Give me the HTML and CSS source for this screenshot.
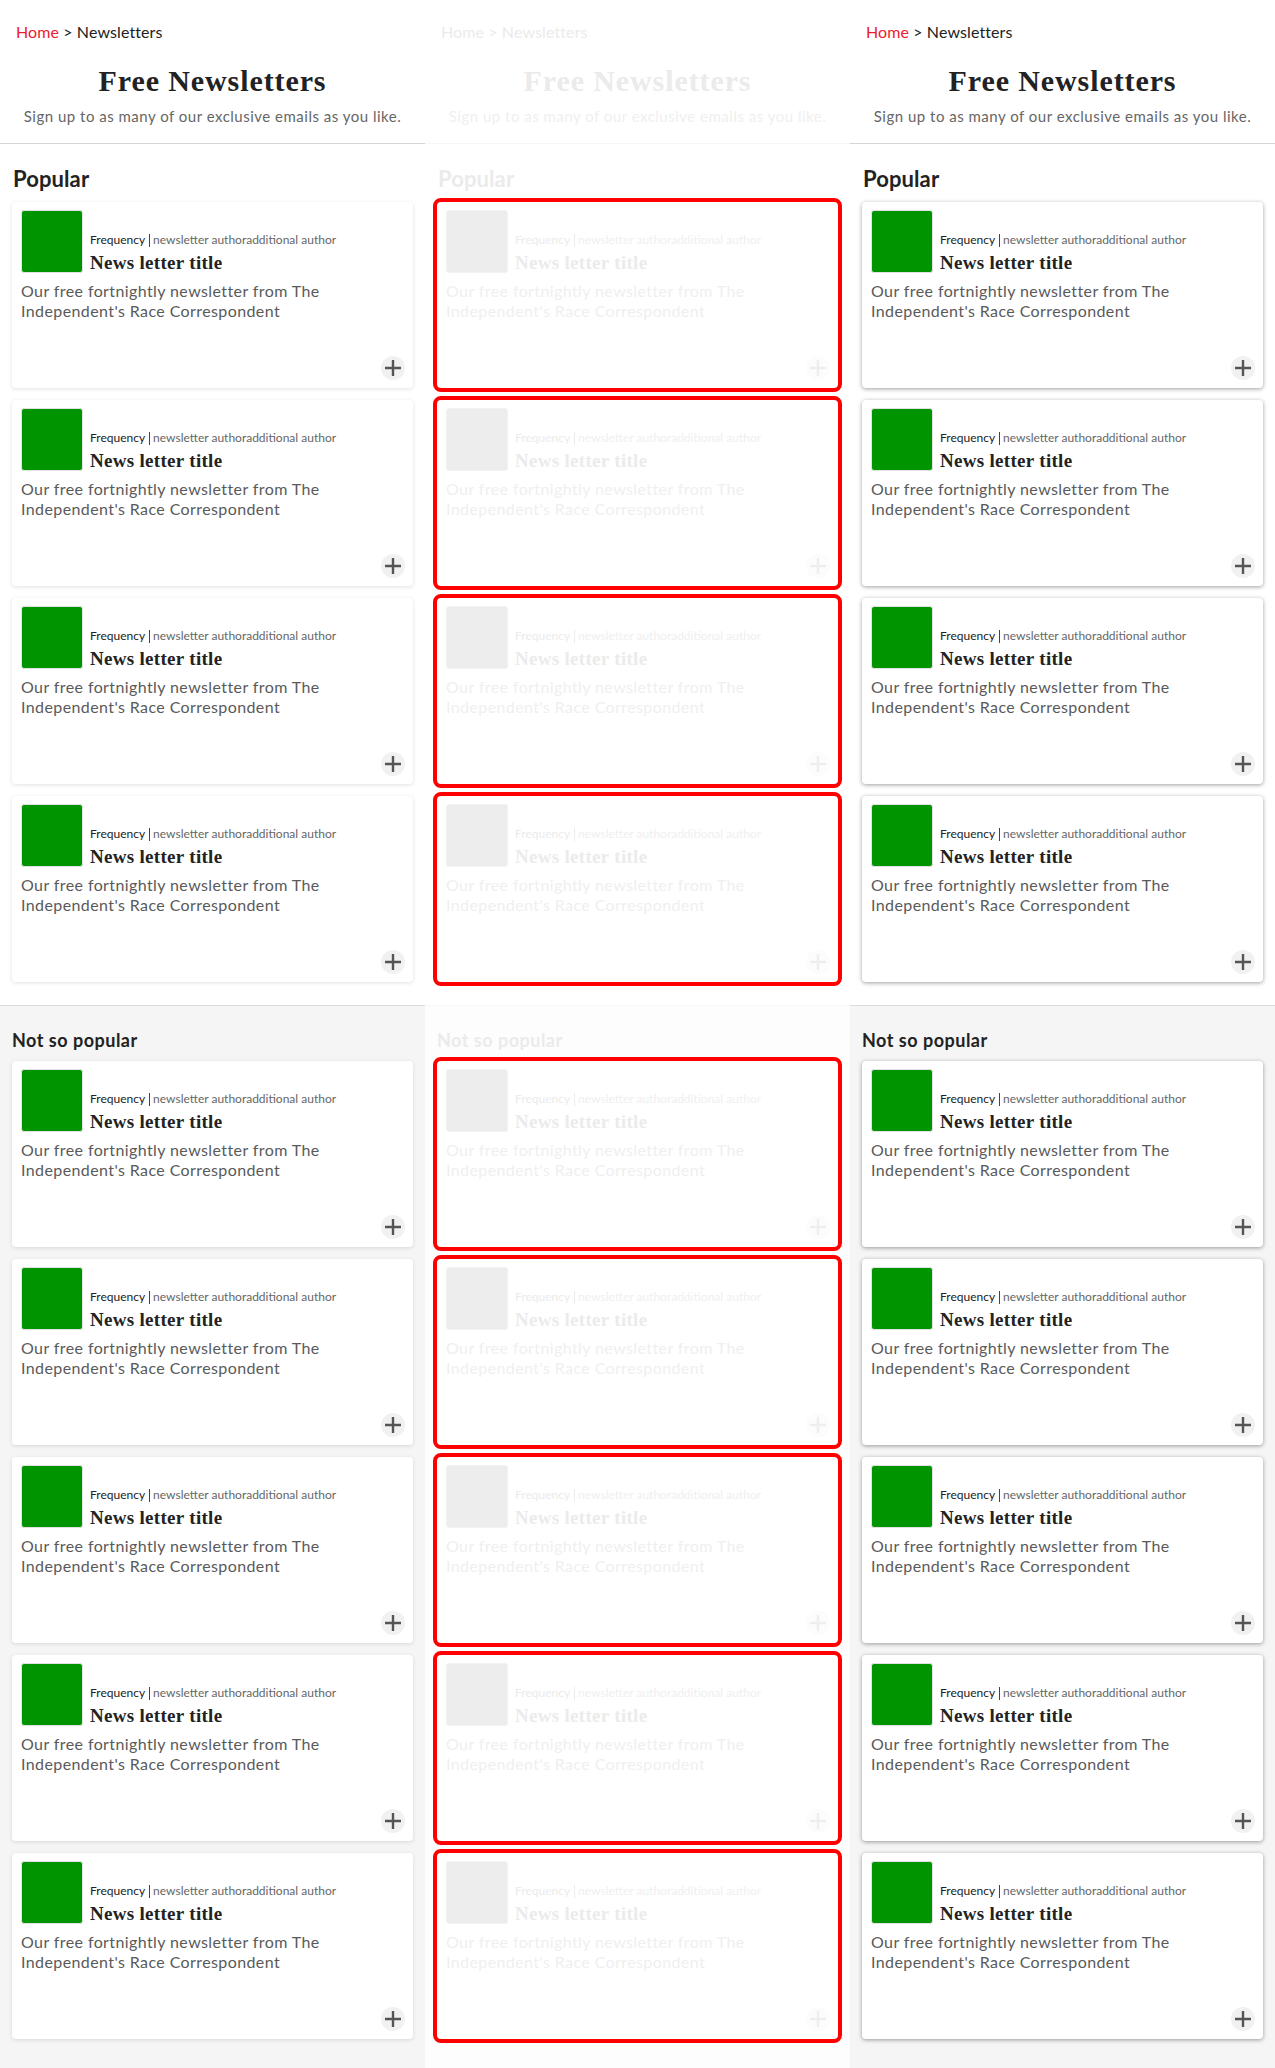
FILE: index.html
```html
<!DOCTYPE html>
<html lang="en">
<head>
<meta charset="utf-8">
<title>Free Newsletters</title>
<link rel="stylesheet" href="styles.css">
</head>
<body>
<div class="panels">

  <div class="panel">
    <header class="page-head">
      <nav class="crumbs"><a class="crumb-home" href="#">Home</a> &gt; <span>Newsletters</span></nav>
      <h1 class="page-title">Free Newsletters</h1>
      <p class="page-sub">Sign up to as many of our exclusive emails as you like.</p>
    </header>
    <section class="group">
      <h2 class="group-title">Popular</h2>
      <div class="cards">
        <article class="card"><div class="card-top"><div class="thumb"></div><div class="card-info"><p class="meta"><span class="freq">Frequency</span><span class="sep"></span><span class="authors">newsletter authoradditional author</span></p><h3 class="card-title">News letter title</h3></div></div><p class="desc">Our free fortnightly newsletter from The Independent's Race Correspondent</p><button class="add" type="button"><svg viewBox="0 0 16 16" width="16" height="16"><path d="M8 0v16M0 8h16"/></svg></button></article>
        <article class="card"><div class="card-top"><div class="thumb"></div><div class="card-info"><p class="meta"><span class="freq">Frequency</span><span class="sep"></span><span class="authors">newsletter authoradditional author</span></p><h3 class="card-title">News letter title</h3></div></div><p class="desc">Our free fortnightly newsletter from The Independent's Race Correspondent</p><button class="add" type="button"><svg viewBox="0 0 16 16" width="16" height="16"><path d="M8 0v16M0 8h16"/></svg></button></article>
        <article class="card"><div class="card-top"><div class="thumb"></div><div class="card-info"><p class="meta"><span class="freq">Frequency</span><span class="sep"></span><span class="authors">newsletter authoradditional author</span></p><h3 class="card-title">News letter title</h3></div></div><p class="desc">Our free fortnightly newsletter from The Independent's Race Correspondent</p><button class="add" type="button"><svg viewBox="0 0 16 16" width="16" height="16"><path d="M8 0v16M0 8h16"/></svg></button></article>
        <article class="card"><div class="card-top"><div class="thumb"></div><div class="card-info"><p class="meta"><span class="freq">Frequency</span><span class="sep"></span><span class="authors">newsletter authoradditional author</span></p><h3 class="card-title">News letter title</h3></div></div><p class="desc">Our free fortnightly newsletter from The Independent's Race Correspondent</p><button class="add" type="button"><svg viewBox="0 0 16 16" width="16" height="16"><path d="M8 0v16M0 8h16"/></svg></button></article>
      </div>
    </section>
    <section class="group group-alt">
      <h2 class="group-title group-title-sm">Not so popular</h2>
      <div class="cards">
        <article class="card"><div class="card-top"><div class="thumb"></div><div class="card-info"><p class="meta"><span class="freq">Frequency</span><span class="sep"></span><span class="authors">newsletter authoradditional author</span></p><h3 class="card-title">News letter title</h3></div></div><p class="desc">Our free fortnightly newsletter from The Independent's Race Correspondent</p><button class="add" type="button"><svg viewBox="0 0 16 16" width="16" height="16"><path d="M8 0v16M0 8h16"/></svg></button></article>
        <article class="card"><div class="card-top"><div class="thumb"></div><div class="card-info"><p class="meta"><span class="freq">Frequency</span><span class="sep"></span><span class="authors">newsletter authoradditional author</span></p><h3 class="card-title">News letter title</h3></div></div><p class="desc">Our free fortnightly newsletter from The Independent's Race Correspondent</p><button class="add" type="button"><svg viewBox="0 0 16 16" width="16" height="16"><path d="M8 0v16M0 8h16"/></svg></button></article>
        <article class="card"><div class="card-top"><div class="thumb"></div><div class="card-info"><p class="meta"><span class="freq">Frequency</span><span class="sep"></span><span class="authors">newsletter authoradditional author</span></p><h3 class="card-title">News letter title</h3></div></div><p class="desc">Our free fortnightly newsletter from The Independent's Race Correspondent</p><button class="add" type="button"><svg viewBox="0 0 16 16" width="16" height="16"><path d="M8 0v16M0 8h16"/></svg></button></article>
        <article class="card"><div class="card-top"><div class="thumb"></div><div class="card-info"><p class="meta"><span class="freq">Frequency</span><span class="sep"></span><span class="authors">newsletter authoradditional author</span></p><h3 class="card-title">News letter title</h3></div></div><p class="desc">Our free fortnightly newsletter from The Independent's Race Correspondent</p><button class="add" type="button"><svg viewBox="0 0 16 16" width="16" height="16"><path d="M8 0v16M0 8h16"/></svg></button></article>
        <article class="card"><div class="card-top"><div class="thumb"></div><div class="card-info"><p class="meta"><span class="freq">Frequency</span><span class="sep"></span><span class="authors">newsletter authoradditional author</span></p><h3 class="card-title">News letter title</h3></div></div><p class="desc">Our free fortnightly newsletter from The Independent's Race Correspondent</p><button class="add" type="button"><svg viewBox="0 0 16 16" width="16" height="16"><path d="M8 0v16M0 8h16"/></svg></button></article>
      </div>
    </section>
  </div>

  <div class="panel panel-ghost">
    <header class="page-head">
      <nav class="crumbs"><a class="crumb-home" href="#">Home</a> &gt; <span>Newsletters</span></nav>
      <h1 class="page-title">Free Newsletters</h1>
      <p class="page-sub">Sign up to as many of our exclusive emails as you like.</p>
    </header>
    <section class="group">
      <h2 class="group-title">Popular</h2>
      <div class="cards">
        <article class="card"><div class="card-top"><div class="thumb"></div><div class="card-info"><p class="meta"><span class="freq">Frequency</span><span class="sep"></span><span class="authors">newsletter authoradditional author</span></p><h3 class="card-title">News letter title</h3></div></div><p class="desc">Our free fortnightly newsletter from The Independent's Race Correspondent</p><button class="add" type="button"><svg viewBox="0 0 16 16" width="16" height="16"><path d="M8 0v16M0 8h16"/></svg></button></article>
        <article class="card"><div class="card-top"><div class="thumb"></div><div class="card-info"><p class="meta"><span class="freq">Frequency</span><span class="sep"></span><span class="authors">newsletter authoradditional author</span></p><h3 class="card-title">News letter title</h3></div></div><p class="desc">Our free fortnightly newsletter from The Independent's Race Correspondent</p><button class="add" type="button"><svg viewBox="0 0 16 16" width="16" height="16"><path d="M8 0v16M0 8h16"/></svg></button></article>
        <article class="card"><div class="card-top"><div class="thumb"></div><div class="card-info"><p class="meta"><span class="freq">Frequency</span><span class="sep"></span><span class="authors">newsletter authoradditional author</span></p><h3 class="card-title">News letter title</h3></div></div><p class="desc">Our free fortnightly newsletter from The Independent's Race Correspondent</p><button class="add" type="button"><svg viewBox="0 0 16 16" width="16" height="16"><path d="M8 0v16M0 8h16"/></svg></button></article>
        <article class="card"><div class="card-top"><div class="thumb"></div><div class="card-info"><p class="meta"><span class="freq">Frequency</span><span class="sep"></span><span class="authors">newsletter authoradditional author</span></p><h3 class="card-title">News letter title</h3></div></div><p class="desc">Our free fortnightly newsletter from The Independent's Race Correspondent</p><button class="add" type="button"><svg viewBox="0 0 16 16" width="16" height="16"><path d="M8 0v16M0 8h16"/></svg></button></article>
      </div>
    </section>
    <section class="group group-alt">
      <h2 class="group-title group-title-sm">Not so popular</h2>
      <div class="cards">
        <article class="card"><div class="card-top"><div class="thumb"></div><div class="card-info"><p class="meta"><span class="freq">Frequency</span><span class="sep"></span><span class="authors">newsletter authoradditional author</span></p><h3 class="card-title">News letter title</h3></div></div><p class="desc">Our free fortnightly newsletter from The Independent's Race Correspondent</p><button class="add" type="button"><svg viewBox="0 0 16 16" width="16" height="16"><path d="M8 0v16M0 8h16"/></svg></button></article>
        <article class="card"><div class="card-top"><div class="thumb"></div><div class="card-info"><p class="meta"><span class="freq">Frequency</span><span class="sep"></span><span class="authors">newsletter authoradditional author</span></p><h3 class="card-title">News letter title</h3></div></div><p class="desc">Our free fortnightly newsletter from The Independent's Race Correspondent</p><button class="add" type="button"><svg viewBox="0 0 16 16" width="16" height="16"><path d="M8 0v16M0 8h16"/></svg></button></article>
        <article class="card"><div class="card-top"><div class="thumb"></div><div class="card-info"><p class="meta"><span class="freq">Frequency</span><span class="sep"></span><span class="authors">newsletter authoradditional author</span></p><h3 class="card-title">News letter title</h3></div></div><p class="desc">Our free fortnightly newsletter from The Independent's Race Correspondent</p><button class="add" type="button"><svg viewBox="0 0 16 16" width="16" height="16"><path d="M8 0v16M0 8h16"/></svg></button></article>
        <article class="card"><div class="card-top"><div class="thumb"></div><div class="card-info"><p class="meta"><span class="freq">Frequency</span><span class="sep"></span><span class="authors">newsletter authoradditional author</span></p><h3 class="card-title">News letter title</h3></div></div><p class="desc">Our free fortnightly newsletter from The Independent's Race Correspondent</p><button class="add" type="button"><svg viewBox="0 0 16 16" width="16" height="16"><path d="M8 0v16M0 8h16"/></svg></button></article>
        <article class="card"><div class="card-top"><div class="thumb"></div><div class="card-info"><p class="meta"><span class="freq">Frequency</span><span class="sep"></span><span class="authors">newsletter authoradditional author</span></p><h3 class="card-title">News letter title</h3></div></div><p class="desc">Our free fortnightly newsletter from The Independent's Race Correspondent</p><button class="add" type="button"><svg viewBox="0 0 16 16" width="16" height="16"><path d="M8 0v16M0 8h16"/></svg></button></article>
      </div>
    </section>
  </div>

  <div class="panel panel-strong">
    <header class="page-head">
      <nav class="crumbs"><a class="crumb-home" href="#">Home</a> &gt; <span>Newsletters</span></nav>
      <h1 class="page-title">Free Newsletters</h1>
      <p class="page-sub">Sign up to as many of our exclusive emails as you like.</p>
    </header>
    <section class="group">
      <h2 class="group-title">Popular</h2>
      <div class="cards">
        <article class="card"><div class="card-top"><div class="thumb"></div><div class="card-info"><p class="meta"><span class="freq">Frequency</span><span class="sep"></span><span class="authors">newsletter authoradditional author</span></p><h3 class="card-title">News letter title</h3></div></div><p class="desc">Our free fortnightly newsletter from The Independent's Race Correspondent</p><button class="add" type="button"><svg viewBox="0 0 16 16" width="16" height="16"><path d="M8 0v16M0 8h16"/></svg></button></article>
        <article class="card"><div class="card-top"><div class="thumb"></div><div class="card-info"><p class="meta"><span class="freq">Frequency</span><span class="sep"></span><span class="authors">newsletter authoradditional author</span></p><h3 class="card-title">News letter title</h3></div></div><p class="desc">Our free fortnightly newsletter from The Independent's Race Correspondent</p><button class="add" type="button"><svg viewBox="0 0 16 16" width="16" height="16"><path d="M8 0v16M0 8h16"/></svg></button></article>
        <article class="card"><div class="card-top"><div class="thumb"></div><div class="card-info"><p class="meta"><span class="freq">Frequency</span><span class="sep"></span><span class="authors">newsletter authoradditional author</span></p><h3 class="card-title">News letter title</h3></div></div><p class="desc">Our free fortnightly newsletter from The Independent's Race Correspondent</p><button class="add" type="button"><svg viewBox="0 0 16 16" width="16" height="16"><path d="M8 0v16M0 8h16"/></svg></button></article>
        <article class="card"><div class="card-top"><div class="thumb"></div><div class="card-info"><p class="meta"><span class="freq">Frequency</span><span class="sep"></span><span class="authors">newsletter authoradditional author</span></p><h3 class="card-title">News letter title</h3></div></div><p class="desc">Our free fortnightly newsletter from The Independent's Race Correspondent</p><button class="add" type="button"><svg viewBox="0 0 16 16" width="16" height="16"><path d="M8 0v16M0 8h16"/></svg></button></article>
      </div>
    </section>
    <section class="group group-alt">
      <h2 class="group-title group-title-sm">Not so popular</h2>
      <div class="cards">
        <article class="card"><div class="card-top"><div class="thumb"></div><div class="card-info"><p class="meta"><span class="freq">Frequency</span><span class="sep"></span><span class="authors">newsletter authoradditional author</span></p><h3 class="card-title">News letter title</h3></div></div><p class="desc">Our free fortnightly newsletter from The Independent's Race Correspondent</p><button class="add" type="button"><svg viewBox="0 0 16 16" width="16" height="16"><path d="M8 0v16M0 8h16"/></svg></button></article>
        <article class="card"><div class="card-top"><div class="thumb"></div><div class="card-info"><p class="meta"><span class="freq">Frequency</span><span class="sep"></span><span class="authors">newsletter authoradditional author</span></p><h3 class="card-title">News letter title</h3></div></div><p class="desc">Our free fortnightly newsletter from The Independent's Race Correspondent</p><button class="add" type="button"><svg viewBox="0 0 16 16" width="16" height="16"><path d="M8 0v16M0 8h16"/></svg></button></article>
        <article class="card"><div class="card-top"><div class="thumb"></div><div class="card-info"><p class="meta"><span class="freq">Frequency</span><span class="sep"></span><span class="authors">newsletter authoradditional author</span></p><h3 class="card-title">News letter title</h3></div></div><p class="desc">Our free fortnightly newsletter from The Independent's Race Correspondent</p><button class="add" type="button"><svg viewBox="0 0 16 16" width="16" height="16"><path d="M8 0v16M0 8h16"/></svg></button></article>
        <article class="card"><div class="card-top"><div class="thumb"></div><div class="card-info"><p class="meta"><span class="freq">Frequency</span><span class="sep"></span><span class="authors">newsletter authoradditional author</span></p><h3 class="card-title">News letter title</h3></div></div><p class="desc">Our free fortnightly newsletter from The Independent's Race Correspondent</p><button class="add" type="button"><svg viewBox="0 0 16 16" width="16" height="16"><path d="M8 0v16M0 8h16"/></svg></button></article>
        <article class="card"><div class="card-top"><div class="thumb"></div><div class="card-info"><p class="meta"><span class="freq">Frequency</span><span class="sep"></span><span class="authors">newsletter authoradditional author</span></p><h3 class="card-title">News letter title</h3></div></div><p class="desc">Our free fortnightly newsletter from The Independent's Race Correspondent</p><button class="add" type="button"><svg viewBox="0 0 16 16" width="16" height="16"><path d="M8 0v16M0 8h16"/></svg></button></article>
      </div>
    </section>
  </div>

</div>
</body>
</html>
```

FILE: styles.css
```css
* { box-sizing: border-box; }

html, body {
  margin: 0;
  padding: 0;
  background: #ffffff;
}

body {
  font-family: Lato, "Noto Sans", "Liberation Sans", sans-serif;
  color: #222;
}

.panels {
  display: grid;
  grid-template-columns: 425px 425px 425px;
  min-height: 2068px;
}

.panel {
  display: flex;
  flex-direction: column;
  background: #fff;
}

/* header */
.page-head {
  padding: 22px 0 17px;
  border-bottom: 1px solid #d6d6d6;
}

.crumbs {
  padding-left: 16px;
  font-size: 16px;
  line-height: 20px;
  color: #222;
  letter-spacing: 0.1px;
}

.crumb-home {
  color: #ec1a2e;
  text-decoration: none;
}

.page-title {
  margin: 22px 0 0;
  text-align: center;
  font-family: "Liberation Serif", "Times New Roman", serif;
  font-weight: 700;
  font-size: 30px;
  line-height: 34px;
  color: #222;
  letter-spacing: 0.9px;
}

.page-sub {
  margin: 8px 0 0;
  text-align: center;
  font-size: 15px;
  line-height: 20px;
  color: #666;
  letter-spacing: 0.5px;
}

/* groups */
.group {
  padding: 22px 12px 23px;
}

.group-alt {
  flex: 1;
  background: #f5f5f5;
  border-top: 1px solid #dcdcdc;
  padding-top: 22px;
  padding-bottom: 28px;
}

.group-title {
  margin: 0 0 10px 1px;
  font-size: 22px;
  line-height: 26px;
  font-weight: 700;
  color: #222;
  letter-spacing: 0.1px;
}

.group-title-sm {
  margin: 0 0 9px 0;
  font-size: 18px;
  line-height: 24px;
  letter-spacing: 0.5px;
}

.cards {
  display: flex;
  flex-direction: column;
  gap: 12px;
}

/* card */
.card {
  height: 186px;
  display: flex;
  flex-direction: column;
  padding: 8px 8px 8px 9px;
  background: #fff;
  border-radius: 4px;
  box-shadow: 0 1px 4px rgba(0, 0, 0, 0.12);
}

.card-top {
  display: flex;
  align-items: flex-end;
  gap: 7px;
}

.thumb {
  flex: none;
  width: 62px;
  height: 63px;
  border-radius: 3px;
  background: #009400;
  border: 1px solid #e2e2e2;
}

.card-info {
  margin-bottom: -1px;
}

.meta {
  margin: 0;
  font-size: 12px;
  line-height: 16px;
  color: #666;
  display: flex;
  align-items: center;
}

.freq {
  color: #222;
}

.sep {
  display: inline-block;
  width: 1px;
  height: 13px;
  background: #444;
  margin: 0 3px 0 4px;
}

.card-title {
  margin: 4px 0 0;
  font-family: "Liberation Serif", "Times New Roman", serif;
  font-weight: 700;
  font-size: 19px;
  line-height: 22px;
  color: #222;
  letter-spacing: 0.3px;
}

.desc {
  margin: 8px 0 0;
  padding-right: 40px;
  font-size: 16px;
  line-height: 20px;
  color: #5a5a5a;
  letter-spacing: 0.4px;
}

.add {
  margin-top: auto;
  align-self: flex-end;
  width: 24px;
  height: 24px;
  padding: 0;
  border: none;
  border-radius: 50%;
  background: #f1f1f1;
  display: flex;
  align-items: center;
  justify-content: center;
  cursor: pointer;
}

.add svg path {
  fill: none;
  stroke: #555;
  stroke-width: 2.4;
}

/* ghost (highlight) panel */
.panel-ghost .page-head {
  border-bottom-color: #f7f7f7;
}

.panel-ghost .crumbs,
.panel-ghost .crumb-home,
.panel-ghost .page-title,
.panel-ghost .page-sub,
.panel-ghost .group-title,
.panel-ghost .freq,
.panel-ghost .meta,
.panel-ghost .card-title,
.panel-ghost .desc {
  color: #ebebeb;
}

.panel-ghost .page-sub,
.panel-ghost .desc,
.panel-ghost .meta {
  color: #efefef;
}

.panel-ghost .sep {
  background: #ebebeb;
}

.panel-ghost .group-alt {
  background: #fdfdfd;
  border-top-color: #f8f8f8;
}

.panel-ghost .card {
  box-shadow: none;
  outline: 4px solid #ff0000;
  outline-offset: 0;
}

.panel-ghost .thumb {
  background: #ededed;
  border-color: #f2f2f2;
}

.panel-ghost .add {
  background: #fcfcfc;
}

.panel-ghost .add svg path {
  stroke: #eeeeee;
}

/* strong shadow panel */
.panel-strong .card {
  box-shadow: 0 1px 4px rgba(0, 0, 0, 0.38);
}
```
